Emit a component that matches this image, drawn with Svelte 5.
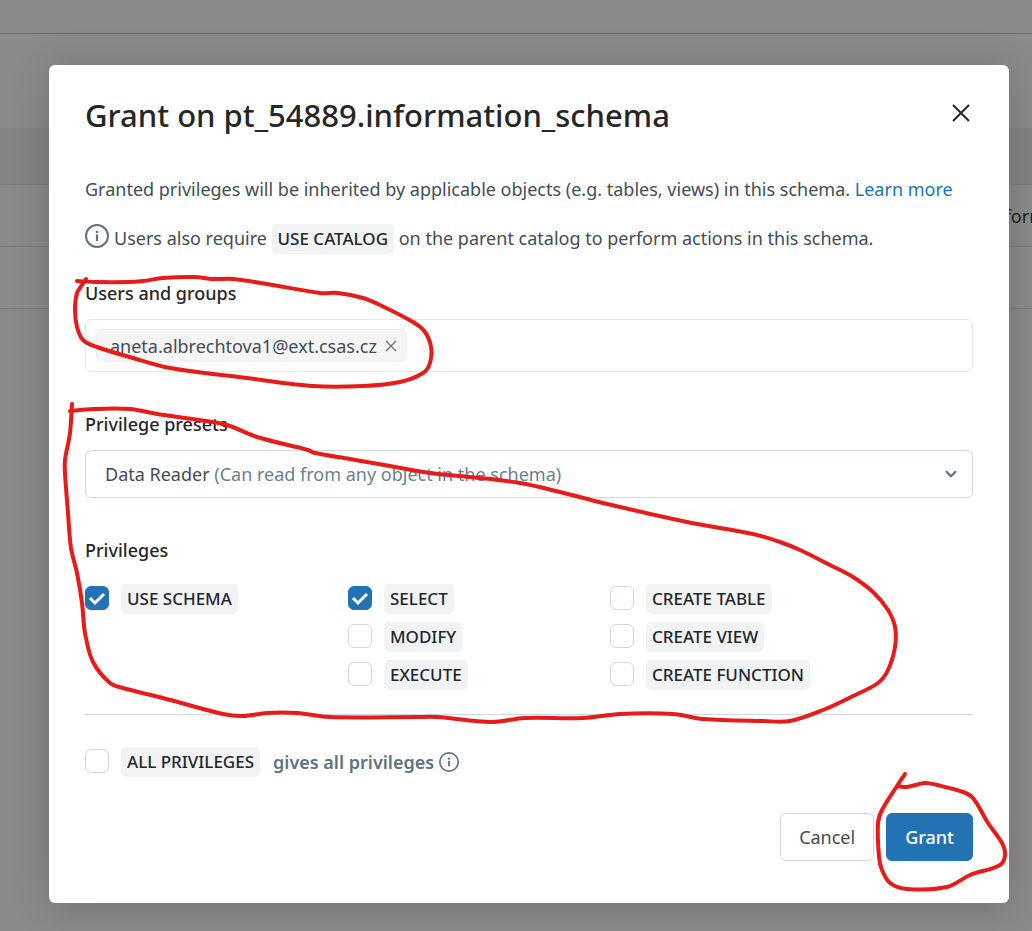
<script>
  const columns = [
    [{ name: 'USE SCHEMA', checked: true }],
    [
      { name: 'SELECT', checked: true },
      { name: 'MODIFY', checked: false },
      { name: 'EXECUTE', checked: false }
    ],
    [
      { name: 'CREATE TABLE', checked: false },
      { name: 'CREATE VIEW', checked: false },
      { name: 'CREATE FUNCTION', checked: false }
    ]
  ];

  // Freehand marker strokes, as points along each line.
  const strokes = [
    [[77,281],[97,282],[127,282],[143,281],[163,278],[195,277],[212,279],[233,279],[267,284],[320,293],[338,293],[363,298],[380,305],[413,322],[425,332],[431,347],[430,363],[423,373],[400,382],[363,386],[313,386],[247,378],[170,368],[133,358],[97,347],[83,340],[77,327],[75,310],[77,293],[82,285],[86,279]],
    [[70,411],[93,409],[130,409],[157,414],[213,422],[230,426],[257,437],[308,450],[315,453],[350,459],[390,466],[430,473],[470,477],[520,483],[560,492],[603,503],[687,522],[753,534],[780,542],[800,550],[830,565],[853,577],[873,592],[888,610],[895,627],[895,647],[888,670],[878,683],[853,696],[823,710],[790,721],[763,721],[703,719],[673,714],[620,714],[583,718],[525,718],[491,722],[437,717],[417,717],[330,717],[297,713],[267,713],[243,716],[223,714],[163,698],[123,688],[110,683],[93,662],[85,633],[82,603],[77,573],[71,548],[68,513],[65,473],[65,460],[70,433],[72,404]],
    [[905,774],[897,786],[882,810],[878,823],[879,857],[882,870],[890,883],[907,889],[947,887],[970,875],[1000,865],[1005,855],[1002,843],[988,823],[973,798],[963,792],[937,785],[925,783],[907,787],[897,786]]
  ];

  function smooth(p) {
    let d = `M${p[0]}`;
    for (let i = 0; i < p.length - 1; i++) {
      const a = p[i - 1] ?? p[i];
      const b = p[i];
      const c = p[i + 1];
      const e = p[i + 2] ?? c;
      const k = Math.hypot(c[0] - b[0], c[1] - b[1]) / 3;
      const t1 = Math.hypot(c[0] - a[0], c[1] - a[1]) || 1;
      const t2 = Math.hypot(e[0] - b[0], e[1] - b[1]) || 1;
      d += `C${b[0] + ((c[0] - a[0]) * k) / t1},${b[1] + ((c[1] - a[1]) * k) / t1} ${c[0] - ((e[0] - b[0]) * k) / t2},${c[1] - ((e[1] - b[1]) * k) / t2} ${c}`;
    }
    return d;
  }
</script>

{#snippet info(size)}
  <svg class="info" width={size} height={size} viewBox="0 0 24 24" aria-hidden="true">
    <circle cx="12" cy="12" r="11" fill="none" stroke="currentColor" stroke-width="2" />
    <path d="M12 10.5v6.5" stroke="currentColor" stroke-width="2.2" />
    <circle cx="12" cy="8" r="1.3" fill="currentColor" />
  </svg>
{/snippet}

{#snippet privilege(item)}
  <label class="check">
    <input type="checkbox" checked={item.checked} />
    <span class="chip">{item.name}</span>
  </label>
{/snippet}

<div class="page">
  <div class="behind" aria-hidden="true">
    <div class="bar"></div>
    <div class="blank"></div>
    <div class="head"></div>
    <div class="line">form</div>
    <div class="line"></div>
  </div>

  <div class="overlay">
    <div class="modal" role="dialog" aria-labelledby="title">
      <header>
        <h1 id="title">Grant on pt_54889.information_schema</h1>
        <button class="close" aria-label="Close">
          <svg width="18" height="18" viewBox="0 0 18 18"><path d="M1 1l16 16M17 1L1 17" stroke="currentColor" stroke-width="2" /></svg>
        </button>
      </header>

      <p>Granted privileges will be inherited by applicable objects (e.g. tables, views) in this schema. <a href="#learn">Learn more</a></p>
      <p class="note">{@render info(24)}<span>Users also require <span class="chip">USE CATALOG</span> on the parent catalog to perform actions in this schema.</span></p>

      <section class="field first">
        <label for="users">Users and groups</label>
        <div class="tags">
          <span class="tag">aneta.albrechtova1@ext.csas.cz
            <button aria-label="Remove">
              <svg width="12" height="12" viewBox="0 0 12 12"><path d="M1 1l10 10M11 1L1 11" stroke="currentColor" stroke-width="1.3" /></svg>
            </button>
          </span>
          <input id="users" type="text" />
        </div>
      </section>

      <section class="field">
        <label for="preset">Privilege presets</label>
        <div class="select">
          <select id="preset"><option value="reader" aria-label="Data Reader"></option></select>
          <span class="value">Data Reader <span class="muted">(Can read from any object in the schema)</span></span>
          <svg width="12" height="8" viewBox="0 0 12 8" aria-hidden="true"><path d="M1 1.2l5 5 5-5" fill="none" stroke="currentColor" stroke-width="2.2" /></svg>
        </div>
      </section>

      <section class="field">
        <h2>Privileges</h2>
        <div class="grid">
          {#each columns as column}
            <div class="column">
              {#each column as item}{@render privilege(item)}{/each}
            </div>
          {/each}
        </div>
      </section>

      <div class="all">
        {@render privilege({ name: 'ALL PRIVILEGES', checked: false })}
        <span class="gives">gives all privileges</span>
        {@render info(20)}
      </div>

      <footer>
        <button class="btn">Cancel</button>
        <button class="btn primary">Grant</button>
      </footer>

      <svg class="marker" aria-hidden="true">
        <g transform="translate(-49 -65)">
          {#each strokes as stroke}<path d={smooth(stroke)} />{/each}
        </g>
      </svg>
    </div>
  </div>
</div>

<style>
  :global(body) { margin: 0; background: #8a8a8a; }
  .page { position: relative; min-height: 100vh; overflow: hidden; font: 18px/30px "Noto Sans", "Open Sans", sans-serif; color: #434c54; }
  .page * { box-sizing: border-box; }
  .behind { position: absolute; inset: 0; color: #1c1f21; }
  .bar { height: 34px; border-bottom: 1px solid #6f6f6f; }
  .blank { height: 94px; }
  .head { height: 57px; background: #848484; border-bottom: 1px solid #7c7e80; }
  .line { height: 62px; border-bottom: 1px solid #7c7e80; padding: 16px 0; text-align: right; margin-right: -14px; }
  .overlay { position: relative; padding: 65px 23px 28px 49px; }
  .modal { position: relative; padding: 27px 36px 42px; border-radius: 6px; background: #fff; box-shadow: 0 4px 40px rgba(0, 0, 0, 0.18); }
  header { display: flex; justify-content: space-between; margin-bottom: 36px; }
  h1, h2, p { margin: 0; }
  h1 { font-size: 31px; line-height: 46px; font-weight: 500; color: #262626; }
  button { font: inherit; cursor: pointer; }
  .close { display: grid; place-items: center; width: 24px; height: 42px; padding: 0; border: 0; background: none; color: #1f272d; }
  a { color: #2272b4; text-decoration: none; }
  .note { display: flex; align-items: center; gap: 5px; height: 30px; margin-top: 19px; }
  .info { flex: none; display: block; color: #5f7281; }
  .note > :global(.info) { align-self: flex-start; margin-top: 1px; }
  .chip { display: inline-block; padding: 0 6px; border-radius: 5px; background: #f2f3f5; color: #1f272d; font-size: 17px; line-height: 30px; font-weight: 500; }
  .field { margin-top: 37px; }
  .field.first { margin-top: 25px; }
  .field > label, h2 { display: block; font-size: 18px; line-height: 30px; font-weight: 500; color: #262626; }
  .tags { display: flex; align-items: center; height: 53px; margin-top: 11px; padding: 0 10px; border: 1px solid #e8e8e8; border-radius: 6px; }
  .tag { display: flex; align-items: center; gap: 8px; height: 33px; padding: 0 9px 0 13px; border: 1px solid #f0f0f0; border-radius: 6px; background: #f5f5f5; }
  .tag button { display: grid; padding: 0; border: 0; background: none; color: #5f7281; }
  .tags input { flex: 1; min-width: 0; border: 0; outline: 0; background: none; font: inherit; }
  .select { display: grid; grid-template-columns: 1fr auto; align-items: center; height: 48px; margin-top: 11px; }
  .select select { grid-area: 1 / 1 / 2 / 3; width: 100%; height: 48px; appearance: none; border: 1px solid #cbd9e4; border-radius: 6px; background: #fff; font: inherit; }
  .value { grid-area: 1 / 1; padding-left: 20px; pointer-events: none; }
  .muted { color: #6b7f8e; }
  .select svg { grid-area: 1 / 2; margin-right: 16px; color: #5f7281; pointer-events: none; }
  .grid { display: grid; grid-template-columns: 263px 262px 1fr; margin-top: 19px; padding-bottom: 24px; border-bottom: 1px solid #cbd9e4; }
  .column { display: flex; flex-direction: column; gap: 8px; }
  .check { display: flex; align-items: flex-start; gap: 12px; }
  .check input { appearance: none; width: 24px; height: 24px; margin: 2px 0 0; border: 1px solid #cbd9e4; border-radius: 6px; background: #fff; }
  .check input:checked { border-color: #2272b4; background: #2272b4 url("data:image/svg+xml,%3Csvg xmlns='http://www.w3.org/2000/svg' viewBox='0 0 22 22'%3E%3Cpath d='M4 11l5 5 9-9' fill='none' stroke='white' stroke-width='3'/%3E%3C/svg%3E") center / 22px no-repeat; }
  .all { display: flex; align-items: center; margin-top: 32px; }
  .gives { margin: 0 5px 0 13px; font-weight: 600; color: #5f7281; }
  footer { display: flex; justify-content: flex-end; gap: 12px; margin-top: 36px; }
  .btn { height: 48px; padding: 0 18px; border: 1px solid #cbd9e4; border-radius: 6px; background: #fff; color: #434c54; }
  .btn.primary { border-color: #2272b4; background: #2272b4; color: #fff; font-weight: 500; }
  .marker { position: absolute; inset: 0; width: 100%; height: 100%; overflow: visible; pointer-events: none; fill: none; stroke: #e81b1b; stroke-width: 4; stroke-linecap: round; stroke-linejoin: round; }
</style>
